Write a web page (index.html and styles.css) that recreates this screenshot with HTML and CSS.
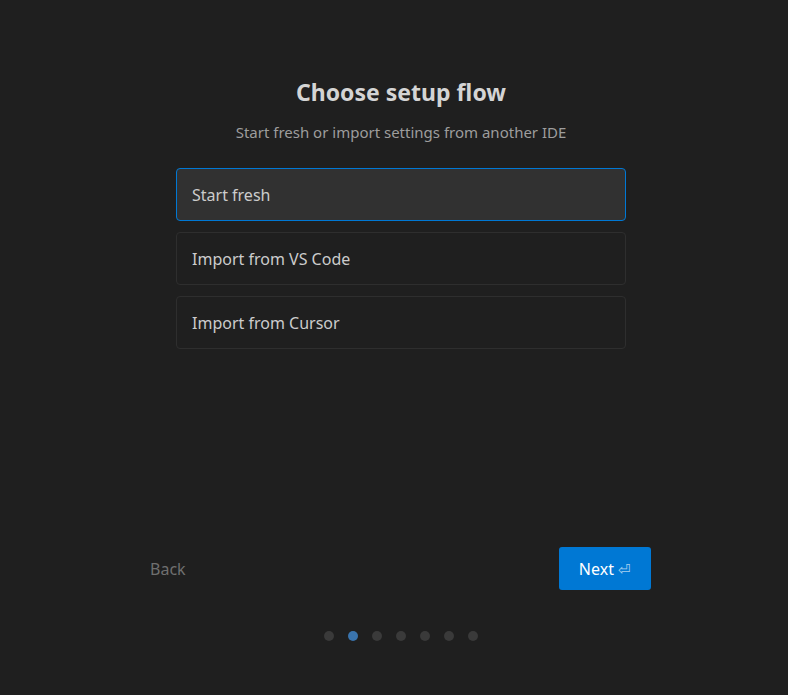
FILE: index.html
```html
<!DOCTYPE html>
<html>
<head>
<meta charset="utf-8">
<link rel="stylesheet" href="styles.css">
</head>
<body>
<div class="page">
  <div class="content">
    <h1 class="title">Choose setup flow</h1>
    <p class="subtitle">Start fresh or import settings from another IDE</p>
    <div class="options">
      <div class="option selected">Start fresh</div>
      <div class="option">Import from VS Code</div>
      <div class="option">Import from Cursor</div>
    </div>
  </div>
  <div class="footer">
    <button class="back">Back</button>
    <button class="next">Next <span class="enter">⏎</span></button>
  </div>
  <div class="dots">
    <span class="dot"></span>
    <span class="dot active"></span>
    <span class="dot"></span>
    <span class="dot"></span>
    <span class="dot"></span>
    <span class="dot"></span>
    <span class="dot"></span>
  </div>
</div>
</body>
</html>
```
FILE: styles.css
```css
html, body {
  margin: 0;
  padding: 0;
  background: #1f1f1f;
}
body {
  font-family: "Noto Sans", "Open Sans", sans-serif;
  color: #cccccc;
}
.page {
  height: 695px;
  display: flex;
  flex-direction: column;
  align-items: center;
}
.content {
  width: 450px;
  margin-left: 14px;
  padding-top: 76px;
  display: flex;
  flex-direction: column;
  align-items: center;
}
.title {
  margin: 0;
  font-size: 23px;
  line-height: 32px;
  font-weight: 700;
  color: #d4d4d4;
}
.subtitle {
  margin: 14px 0 0;
  font-size: 15px;
  line-height: 20px;
  color: #9d9d9d;
}
.options {
  margin-top: 26px;
  width: 100%;
  display: flex;
  flex-direction: column;
  gap: 11px;
}
.option {
  box-sizing: border-box;
  height: 53px;
  border: 1px solid #2e2e2e;
  border-radius: 4px;
  padding: 0 15px;
  display: flex;
  align-items: center;
  font-size: 16px;
  color: #cccccc;
  background: #1f1f1f;
}
.option.selected {
  background: #313131;
  border-color: #0078d4;
}
.footer {
  margin-top: auto;
  margin-right: 2px;
  width: 516px;
  display: flex;
  justify-content: space-between;
  align-items: center;
}
.back {
  background: none;
  border: none;
  font-family: inherit;
  font-size: 16px;
  color: #6f6f6f;
  padding: 0 15px;
  height: 43px;
}
.next {
  width: 92px;
  height: 43px;
  background: #0078d4;
  border: none;
  border-radius: 3px;
  font-family: inherit;
  font-size: 16px;
  color: #ffffff;
  padding: 0;
}
.enter {
  font-size: 15px;
  color: #a8d0f0;
}
.dots {
  margin-top: 41px;
  margin-bottom: 54px;
  margin-left: 14px;
  display: flex;
  gap: 14px;
}
.dot {
  width: 10px;
  height: 10px;
  border-radius: 50%;
  background: #3a3a3a;
}
.dot.active {
  background: #3a74ad;
}
```
